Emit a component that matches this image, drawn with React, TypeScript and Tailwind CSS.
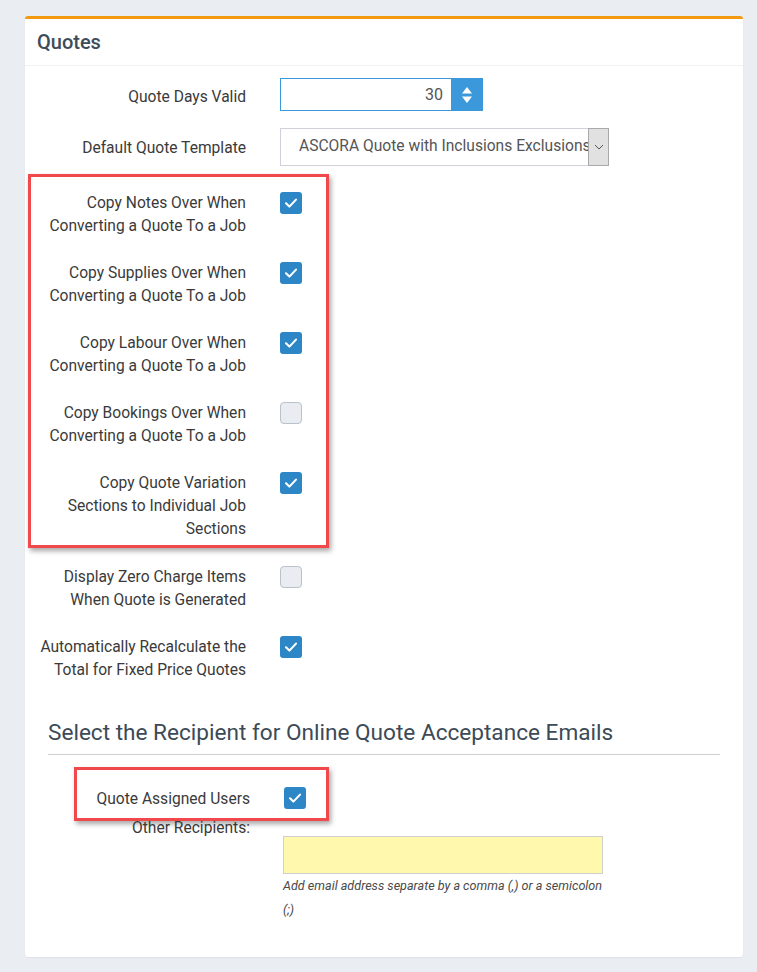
import React from "react";

const font = { fontFamily: "Roboto, 'Liberation Sans', Arial, sans-serif" };

function Check({ checked }: { checked: boolean }) {
  if (!checked) {
    return (
      <span className="block w-[22px] h-[22px] rounded-[4px] border border-[#b9c1ca] bg-[#e9ecf0]" />
    );
  }
  return (
    <span className="flex w-[22px] h-[22px] items-center justify-center rounded-[3px] bg-[#2d86c6]">
      <svg width="22" height="22" viewBox="0 0 22 22" fill="none">
        <path d="M6 11.3 L9.4 14.6 L16 7.6" stroke="#fff" strokeWidth="2.1" strokeLinecap="round" strokeLinejoin="round" />
      </svg>
    </span>
  );
}

function CheckRow({
  lines,
  checked,
  labelW,
}: {
  lines: string[];
  checked: boolean;
  labelW: string;
}) {
  return (
    <div className="flex items-start">
      <div className={`${labelW} pt-[1.5px] text-right text-[15.6px] leading-[23px] text-[#3a3a3a]`}>
        {lines.map((l, i) => (
          <div key={i}>{l}</div>
        ))}
      </div>
      <div className="ml-[34px] pt-[2px]">
        <Check checked={checked} />
      </div>
    </div>
  );
}

export default function App() {
  return (
    <div className="min-h-[972px] bg-[#eaedf2] pt-4 pl-[25px] pr-[14px] pb-[15px]" style={font}>
      <div className="bg-white border-t-[3px] border-[#f39a0f] rounded-[3px] shadow-[0_1px_2px_rgba(0,0,0,0.06)]">
        <div className="h-[47px] flex items-center px-3 border-b border-[#eff1f3]">
          <h2 className="text-[20px] font-medium text-[#3d4c5a]">Quotes</h2>
        </div>

        <div className="pt-[12px] pb-[35px]">
          <div className="flex items-center">
            <div className="w-[221px] text-right text-[15.6px] leading-[23px] text-[#3a3a3a] pt-[5px]">
              Quote Days Valid
            </div>
            <div className="ml-[34px] flex h-[33px] w-[203px] border border-[#3a98db]">
              <div className="flex-1 flex items-center justify-end pr-[8px] text-[16px] text-[#555]">30</div>
              <div className="w-[31px] bg-[#3a98db] flex items-center justify-center">
                <svg width="12" height="20" viewBox="0 0 12 20">
                  <path d="M6 2 L11 8.5 H1 Z" fill="#fff" />
                  <path d="M6 18 L11 11.5 H1 Z" fill="#fff" />
                </svg>
              </div>
            </div>
          </div>

          <div className="flex items-center mt-[17px]">
            <div className="w-[221px] text-right text-[15.6px] leading-[23px] text-[#3a3a3a] pt-[3px]">
              Default Quote Template
            </div>
            <div className="ml-[34px] flex h-[38px] w-[329px] border border-[#cfd2dc]">
              <div className="flex-1 min-w-0 overflow-hidden whitespace-nowrap flex items-center pl-[18px] text-[15.6px] text-[#555]">
                ASCORA Quote with Inclusions Exclusions
              </div>
              <div className="w-[21px] shrink-0 bg-[#e1e1e1] border border-[#a9a9a9] -my-px -mr-px flex items-center justify-center">
                <svg width="10" height="6" viewBox="0 0 10 6" fill="none">
                  <path d="M1 1 L5 5 L9 1" stroke="#555" strokeWidth="1" />
                </svg>
              </div>
            </div>
          </div>

          <div className="mt-[8px] ml-[3px] w-[301px] border-[3px] border-[#f1494b] shadow-[2px_3px_5px_rgba(0,0,0,0.35)] pt-[13px] pb-[4px] flex flex-col gap-[22.5px]">
            <CheckRow labelW="w-[215px]" lines={["Copy Notes Over When", "Converting a Quote To a Job"]} checked />
            <CheckRow labelW="w-[215px]" lines={["Copy Supplies Over When", "Converting a Quote To a Job"]} checked />
            <CheckRow labelW="w-[215px]" lines={["Copy Labour Over When", "Converting a Quote To a Job"]} checked />
            <CheckRow labelW="w-[215px]" lines={["Copy Bookings Over When", "Converting a Quote To a Job"]} checked={false} />
            <CheckRow
              labelW="w-[215px]"
              lines={["Copy Quote Variation", "Sections to Individual Job", "Sections"]}
              checked
            />
          </div>

          <div className="mt-[16.5px] flex flex-col gap-[22.5px]">
            <CheckRow labelW="w-[221px]" lines={["Display Zero Charge Items", "When Quote is Generated"]} checked={false} />
            <CheckRow
              labelW="w-[221px]"
              lines={["Automatically Recalculate the", "Total for Fixed Price Quotes"]}
              checked
            />
          </div>

          <div className="mx-[23px] mt-[36px]">
            <h3 className="text-[22.6px] leading-[30px] text-[#3c4a57] pb-[6px] border-b border-[#cfcfcf]">
              Select the Recipient for Online Quote Acceptance Emails
            </h3>

            <div className="mt-[12px] ml-[26px] w-[255px] border-[3px] border-[#f1494b] shadow-[2px_3px_5px_rgba(0,0,0,0.35)] pt-[17px] pb-[8px] flex items-center">
              <div className="w-[173px] pt-[1px] text-right text-[15.6px] leading-[22px] text-[#3a3a3a]">Quote Assigned Users</div>
              <div className="ml-[34px]">
                <Check checked />
              </div>
            </div>

            <div className="flex items-start">
              <div className="w-[202px] -mt-[4px] text-right text-[15.6px] leading-[23px] text-[#3a3a3a]">
                Other Recipients:
              </div>
              <div className="ml-[33px] mt-[15px] w-[320px]">
                <div className="h-[38px] bg-[#fff8ad] border border-[#cfcfcf]" />
                <div className="text-[12.6px] italic leading-[24px] text-[#4a4a4a] whitespace-nowrap">
                  Add email address separate by a comma (,) or a semicolon
                  <br />
                  (;)
                </div>
              </div>
            </div>
          </div>
        </div>
      </div>
    </div>
  );
}
